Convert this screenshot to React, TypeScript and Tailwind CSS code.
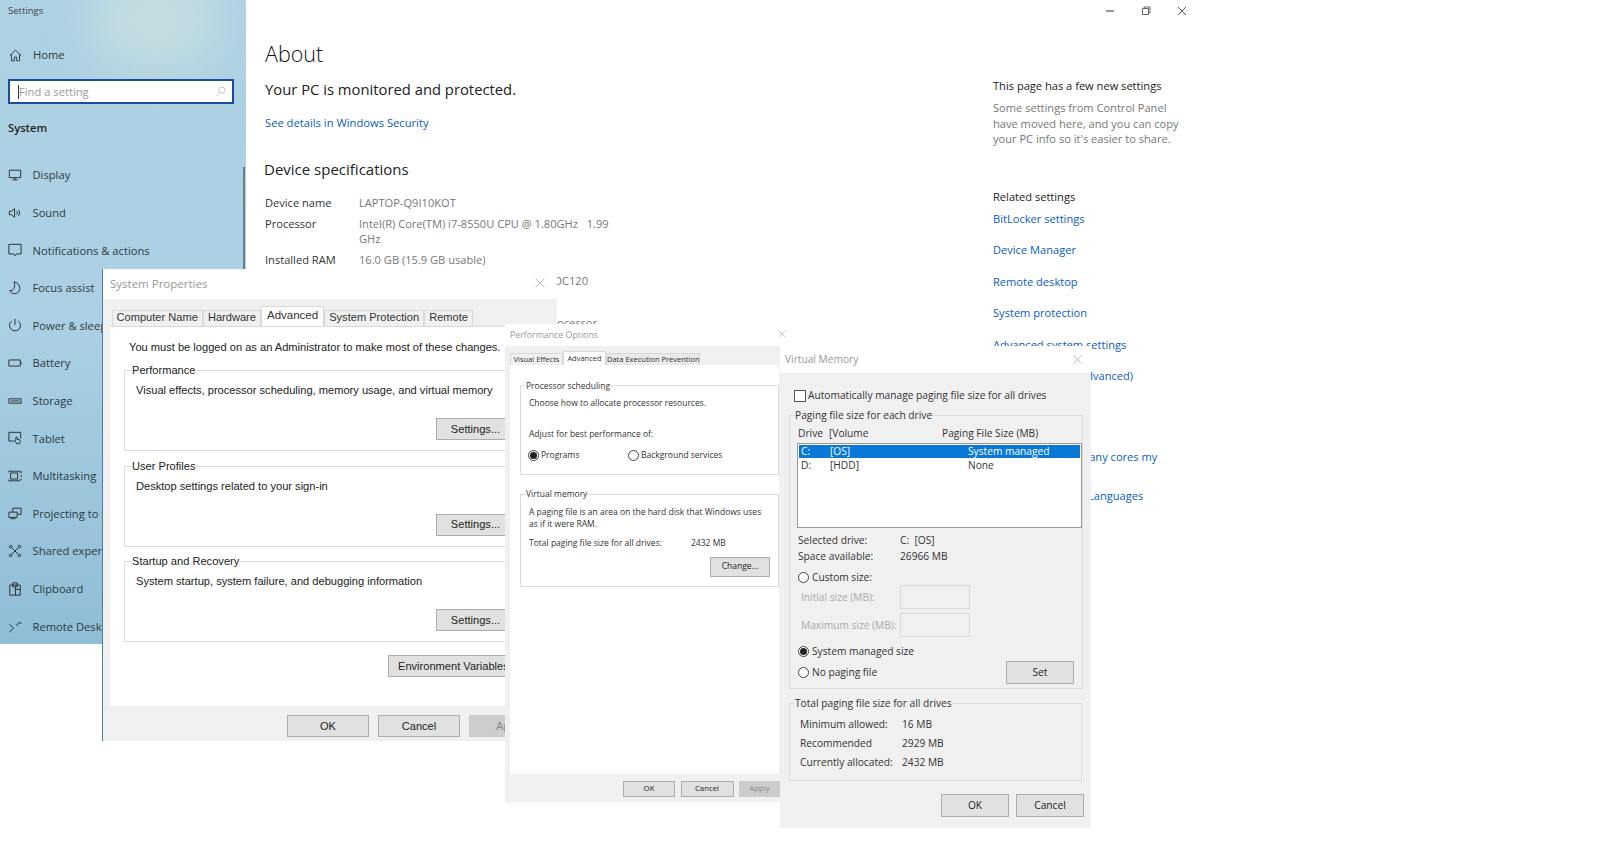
import type { ReactNode } from 'react';

const SEGOE = 'font-["Open_Sans","Noto_Sans",sans-serif]';
const ARIAL = 'font-["Liberation_Sans",Arial,sans-serif]';

// thin windows 10 style nav glyphs, 16x16 box
const navItems: { label: string; icon: ReactNode }[] = [
  {
    label: 'Display',
    icon: <path d="M1.5 2.5h13v8.500h-13zM5 13.500h6M8 11v2.500" />,
  },
  {
    label: 'Sound',
    icon: <path d="M1.500 6v4h2.500l3.500 3V3L4 6zM10 6c.8 1 .8 3 0 4M12 4.500c1.600 2 1.600 5 0 7" />,
  },
  {
    label: 'Notifications & actions',
    icon: <path d="M1 1.500h14v11H9.500L8 14.500l-1.500-2H1z" />,
  },
  {
    label: 'Focus assist',
    icon: <path d="M7 1c3 .5 6.500 3 6.500 7.500 0 3.500-2.500 6-6 6-2.500 0-4.500-1.300-5.500-3.500 4 .5 7-3.500 5-10z" />,
  },
  {
    label: 'Power & sleep',
    icon: <path d="M8 1v7M4.500 3.200a6.300 6.300 0 1 0 7 0" />,
  },
  {
    label: 'Battery',
    icon: <path d="M1 4.500h13v7H1zM15 7v2" />,
  },
  {
    label: 'Storage',
    icon: <path d="M1 5.500h14v5H1zM3 8h10" />,
  },
  {
    label: 'Tablet',
    icon: <path d="M7 11.500H1v-10h13.500v7M9 9.500V7.500c0-1 1.500-1 1.500 0v2l3 .5c1 .5.500 3-.5 4.500H10l-2-3z" />,
  },
  {
    label: 'Multitasking',
    icon: <path d="M3 4.500h8v7H3zM1 2.500h12M1 13.500h12M15 2v3M15 7v2M15 11v2M1 2.500v1.500M13 2.500v1.500M1 12v1.500M13 12v1.500" />,
  },
  {
    label: 'Projecting to this PC',
    icon: <path d="M5.500 7V2.500h9.500v7h-4.500M1 7h9.500v6H1zM3 14.500h5.500" />,
  },
  {
    label: 'Shared experiences',
    icon: (
      <>
        <path d="M4.500 4.500l7 7M11.500 4.500l-7 7" />
        <circle cx="3" cy="3" r="1.500" />
        <circle cx="13" cy="3" r="1.500" />
        <circle cx="3" cy="13" r="1.500" />
        <circle cx="13" cy="13" r="1.500" />
      </>
    ),
  },
  {
    label: 'Clipboard',
    icon: <path d="M2 3.500h12v11.500H2zM5.500 1h5v4.500h-5zM8.500 5.500V15M8.500 8.500H14" />,
  },
  {
    label: 'Remote Desktop',
    icon: <path d="M1.500 6l5 4.500-5 4.500M9.500 8l3-4 3 1" />,
  },
];

function NavIcon({ children }: { children: ReactNode }) {
  return (
    <svg viewBox="0 0 16 16" fill="none" stroke="#2a2f33" strokeWidth="1.100" className="w-[14px] h-[14px] shrink-0">
      {children}
    </svg>
  );
}

function Sidebar() {
  return (
    <aside className="relative w-[246px] h-[644px] shrink-0 overflow-hidden bg-gradient-to-b from-[#aed2e4] via-[#abd0e3] to-[#8fbdd6] text-[#222]">
      <div className="absolute left-[90px] -top-[30px] w-[130px] h-[100px] rounded-full bg-[#c4dde0] blur-xl" />
      <div className="relative">
        <p className="pl-[8px] pt-[5px] h-[25px] text-[9.500px] leading-[12px] text-[#444]">Settings</p>
        <div className="flex items-center gap-[11px] pl-[9px] mt-[19px] h-[22px]">
          <svg viewBox="0 0 16 16" fill="none" stroke="#222" strokeWidth="1" className="w-[13px] h-[13px]">
            <path d="M1 8l7-6.500L15 8M3 6.500v8h3.500v-4.500h3v4.500H13v-8" />
          </svg>
          <span className="text-[11.200px] leading-none text-[#2c3a42]">Home</span>
        </div>
        <div className="ml-[8px] mr-[12px] mt-[13px] h-[25px] border-2 border-[#1b4ba0] bg-white flex items-center justify-between pl-[8px] pr-[6px]">
          <span className="text-[11.200px] text-[#999] border-l border-[#333] leading-[14px]">Find a setting</span>
          <svg viewBox="0 0 16 16" fill="none" stroke="#aaa" strokeWidth="1" className="w-[11px] h-[11px]">
            <circle cx="10" cy="6" r="4.500" />
            <path d="M7 9.500L1.500 15" />
          </svg>
        </div>
        <p className="pl-[8px] mt-[15px] text-[11.200px] leading-[18px] font-semibold">System</p>
        <nav className="mt-[27.500px] flex flex-col gap-[16.600px]">
          {navItems.map((item) => (
            <div key={item.label} className="flex items-center gap-[10.500px] pl-[8px] h-[21px]">
              <NavIcon>{item.icon}</NavIcon>
              <span className="text-[11.200px] leading-none whitespace-nowrap text-[#2c3a42]">{item.label}</span>
            </div>
          ))}
        </nav>
      </div>
      <div className="absolute right-[1px] top-[167px] w-[2px] h-[105px] bg-[#6b7f8a]" />
    </aside>
  );
}

function SpecRow({ label, children }: { label: string; children: ReactNode }) {
  return (
    <div className="flex text-[11.100px] leading-[15.500px]">
      <span className="w-[94px] shrink-0 text-[#333]">{label}</span>
      <span className="w-[262px] text-[#777]">{children}</span>
    </div>
  );
}

function RightLink({ children, className = 'mb-[15.600px]' }: { children: ReactNode; className?: string }) {
  return <a className={`block text-[11.100px] leading-[16px] text-[#0a5cc4] ${className}`}>{children}</a>;
}

function MainContent() {
  return (
    <main className="flex-1 flex">
      <div className="w-[747px] pl-[19px] pt-[40px]">
        <h1 className="text-[21.500px] leading-[28px] font-light text-[#111]">About</h1>
        <p className="mt-[10px] text-[14.800px] leading-[22px] text-[#222]">Your PC is monitored and protected.</p>
        <a className="block mt-[14px] text-[11.200px] leading-[18px] text-[#0a5cc4]">See details in Windows Security</a>
        <h2 className="mt-[26px] -ml-[1px] text-[15px] leading-[22px] text-[#222]">Device specifications</h2>
        <div className="mt-[14.500px] flex flex-col gap-[5.500px]">
          <SpecRow label="Device name">LAPTOP-Q9I10KOT</SpecRow>
          <SpecRow label="Processor">Intel(R) Core(TM) i7-8550U CPU @ 1.80GHz &nbsp; 1.99 GHz</SpecRow>
          <SpecRow label="Installed RAM">16.0 GB (15.9 GB usable)</SpecRow>
          <SpecRow label="Device ID">
            <span className="block w-[229px] text-right">DC120</span>
          </SpecRow>
          <SpecRow label="Product ID"> </SpecRow>
          <SpecRow label="System type">
            <span className="block w-[238px] text-right">processor</span>
          </SpecRow>
        </div>
      </div>
      <div className="w-[192px] pt-[78px]">
        <p className="text-[11.100px] leading-[16px] text-[#222]">This page has a few new settings</p>
        <p className="mt-[6px] text-[11.100px] leading-[15.500px] text-[#777]">
          Some settings from Control Panel have moved here, and you can copy your PC info so it&apos;s easier to share.
        </p>
        <p className="mt-[42px] mb-[6px] text-[11.100px] leading-[16px] text-[#222]">Related settings</p>
        <RightLink>BitLocker settings</RightLink>
        <RightLink>Device Manager</RightLink>
        <RightLink>Remote desktop</RightLink>
        <RightLink>System protection</RightLink>
        <RightLink>Advanced system settings</RightLink>
        <RightLink>Rename this PC (advanced)</RightLink>
        <p className="mt-[44px] mb-[5px] text-[11.100px] leading-[16px] text-[#222]">Help from the web</p>
        <RightLink className="mb-[6.400px]">Finding out how many cores my processor has</RightLink>
        <RightLink>Checking multiple Languages support</RightLink>
      </div>
    </main>
  );
}

function WindowControls() {
  return (
    <div className="absolute left-[1105px] top-0 flex items-center h-[21px] gap-[26px]">
      <svg viewBox="0 0 10 10" fill="none" stroke="#333" className="w-[10px] h-[10px]">
        <path d="M1 5h8" />
      </svg>
      <svg viewBox="0 0 10 10" fill="none" stroke="#666" className="w-[10px] h-[10px]">
        <path d="M1.500 2.500h6v6h-6zM3 2.500V1h6v6H7.500" />
      </svg>
      <svg viewBox="0 0 10 10" fill="none" stroke="#555" className="w-[10px] h-[10px]">
        <path d="M1 1l8 8M9 1l-8 8" />
      </svg>
    </div>
  );
}

function CloseX({ className }: { className: string }) {
  return (
    <svg viewBox="0 0 10 10" fill="none" stroke="#aaa" strokeWidth="0.800" className={className}>
      <path d="M0.500 0.500l9 9M9.500 0.500l-9 9" />
    </svg>
  );
}

function Btn({ label, className, disabled }: { label: string; className: string; disabled?: boolean }) {
  return (
    <div
      className={`flex items-center justify-center border whitespace-nowrap overflow-hidden ${
        disabled ? 'bg-[#cccccc] border-[#cccccc] text-[#8a8a8a]' : 'bg-[#e1e1e1] border-[#adadad] text-[#222]'
      } ${className}`}
    >
      {label}
    </div>
  );
}

function Group({ title, inset, className, children }: { title: string; inset: string; className: string; children: ReactNode }) {
  return (
    <fieldset className={`border border-[#dcdcdc] ${className}`}>
      <legend className={`px-0 leading-none ${inset}`}>{title}</legend>
      {children}
    </fieldset>
  );
}

function SystemProperties() {
  const tabs = ['Computer Name', 'Hardware', 'Advanced', 'System Protection', 'Remote'];
  return (
    <section className={`absolute left-[102px] top-[269px] w-[455px] h-[472px] border-l border-l-[#4a7fa5] flex flex-col ${ARIAL}`}>
      <header className="relative h-[30px] bg-white flex items-center pl-[7px] text-[11.500px] text-[#999]">
        <span className={SEGOE}>System Properties</span>
        <CloseX className="absolute right-[12px] top-[9px] w-[10px] h-[10px]" />
      </header>
      <div className="flex-1 bg-[#f0f0f0] flex flex-col">
        <div className="pl-[8.500px] h-[27px] flex items-end">
          {tabs.map((t) => (
            <div
              key={t}
              className={
                t === 'Advanced'
                  ? 'h-[20px] px-[5px] bg-white border border-b-0 border-[#d9d9d9] text-[11.500px] leading-[16px] text-[#333]'
                  : 'h-[16px] px-[4px] bg-[#f0f0f0] border border-b-0 border-[#d9d9d9] text-[11.100px] leading-[13px] text-[#333]'
              }
            >
              {t}
            </div>
          ))}
        </div>
        <div className="mx-[7px] h-[380px] w-[440px] bg-white border-t border-[#d9d9d9] pl-[14px] text-[11.100px] text-[#222]">
          <p className="mt-[12px] leading-[16px] whitespace-nowrap pl-[5px]">You must be logged on as an Administrator to make most of these changes.</p>
          <Group title="Performance" inset="ml-[7px]" className="mt-[10px] h-[86px] w-[420px]">
            <p className="pl-[11px] mt-[7px] leading-[14px] whitespace-nowrap">Visual effects, processor scheduling, memory usage, and virtual memory</p>
            <Btn label="Settings..." className="ml-[311px] mt-[21px] w-[79px] h-[22px]" />
          </Group>
          <Group title="User Profiles" inset="ml-[7px]" className="mt-[9.500px] h-[86px] w-[420px]">
            <p className="pl-[11px] mt-[7px] leading-[14px]">Desktop settings related to your sign-in</p>
            <Btn label="Settings..." className="ml-[311px] mt-[21px] w-[79px] h-[22px]" />
          </Group>
          <Group title="Startup and Recovery" inset="ml-[7px]" className="mt-[9.500px] h-[86px] w-[420px]">
            <p className="pl-[11px] mt-[7px] leading-[14px]">System startup, system failure, and debugging information</p>
            <Btn label="Settings..." className="ml-[311px] mt-[21px] w-[79px] h-[22px]" />
          </Group>
          <Btn label="Environment Variables..." className="ml-[264px] mt-[13px] w-[160px] h-[22px] justify-start pl-[9px]" />
        </div>
        <div className="flex gap-[9px] pl-[184px] pt-[9px] text-[11.100px]">
          <Btn label="OK" className="w-[82px] h-[22px]" />
          <Btn label="Cancel" className="w-[82px] h-[22px]" />
          <Btn label="Apply" disabled className="w-[82px] h-[22px]" />
        </div>
      </div>
    </section>
  );
}

function Radio({ on }: { on?: boolean }) {
  return (
    <span className="w-[11px] h-[11px] rounded-full border border-[#444] bg-white flex items-center justify-center shrink-0">
      {on && <span className="w-[7px] h-[7px] rounded-full bg-[#222]" />}
    </span>
  );
}

function PerformanceOptions() {
  return (
    <section className={`absolute left-[505px] top-[324px] w-[275px] h-[478px] flex flex-col text-[8.500px] ${SEGOE}`}>
      <header className="relative h-[22px] bg-white flex items-center pl-[5px] pt-[1px] text-[8.800px] text-[#999]">
        Performance Options
        <CloseX className="absolute right-[-6px] top-[6px] w-[8px] h-[8px]" />
      </header>
      <div className="flex-1 bg-[#f0f0f0] pl-[5px] flex flex-col">
        <div className="h-[19px] flex items-end text-[#333] text-[7.500px] whitespace-nowrap">
          <div className="w-[53px] h-[12px] text-center leading-[11px] border border-b-0 border-[#d9d9d9]">Visual Effects</div>
          <div className="w-[43px] h-[14px] text-center leading-[12px] bg-white border border-b-0 border-[#d9d9d9]">Advanced</div>
          <div className="w-[94px] h-[12px] text-center leading-[11px] border border-b-0 border-[#d9d9d9] bg-[#e9e9e9]">Data Execution Prevention</div>
        </div>
        <div className="h-[409px] w-[269px] bg-white pl-[10px] text-[#333] flow-root">
          <Group title="Processor scheduling" inset="ml-[5px]" className="mt-[16.500px] h-[93.500px] w-[259px]">
            <p className="pl-[8px] mt-[7px] leading-[12px]">Choose how to allocate processor resources.</p>
            <p className="pl-[8px] mt-[19px] leading-[12px]">Adjust for best performance of:</p>
            <div className="flex items-center pl-[7px] mt-[9px] h-[12px]">
              <Radio on />
              <span className="ml-[2px] w-[87px]">Programs</span>
              <Radio />
              <span className="ml-[2px]">Background services</span>
            </div>
          </Group>
          <Group title="Virtual memory" inset="ml-[5px]" className="mt-[15px] h-[97px] w-[259px]">
            <p className="pl-[8px] mt-[7.500px] leading-[12.300px] w-[250px]">A paging file is an area on the hard disk that Windows uses as if it were RAM.</p>
            <div className="flex pl-[8px] mt-[6px] leading-[12px]">
              <span className="w-[162px]">Total paging file size for all drives:</span>
              <span>2432 MB</span>
            </div>
            <Btn label="Change..." className="ml-[189px] mt-[8px] w-[60px] h-[20px]" />
          </Group>
        </div>
        <div className="flex gap-[5.500px] pl-[113px] pt-[7px] text-[7.800px]">
          <Btn label="OK" className="w-[52px] h-[16px]" />
          <Btn label="Cancel" className="w-[53px] h-[16px]" />
          <Btn label="Apply" disabled className="w-[41px] h-[16px]" />
        </div>
      </div>
    </section>
  );
}

function VmInput() {
  return <span className="w-[70px] h-[24px] border border-[#d9d9d9] bg-[#f0f0f0]" />;
}

function VirtualMemory() {
  return (
    <section className={`absolute left-[780px] top-[346px] w-[311px] h-[482px] flex flex-col text-[10.200px] text-[#333] ${SEGOE}`}>
      <header className="relative h-[27px] bg-white flex items-center pl-[5px] pt-[1px] text-[10.200px] text-[#999]">
        Virtual Memory
        <CloseX className="absolute right-[9px] top-[9px] w-[9px] h-[9px]" />
      </header>
      <div className="flex-1 bg-[#f0f0f0] pl-[9px] flow-root">
        <div className="flex items-center gap-[2px] h-[14px] mt-[16px] ml-[5px]">
          <span className="w-[12px] h-[12px] border border-[#555] bg-white" />
          <span>Automatically manage paging file size for all drives</span>
        </div>
        <Group title="Paging file size for each drive" inset="ml-[5px]" className="mt-[7px] h-[279px] w-[293px]">
          <div className="flex mt-[6px] pl-[8px] h-[14px] leading-[14px]">
            <span className="w-[31px]">Drive</span>
            <span className="w-[113px]">[Volume</span>
            <span>Paging File Size (MB)</span>
          </div>
          <div className="mt-[3px] ml-[7px] w-[285px] h-[85px] border border-[#999] bg-white p-px">
            <div className="flex h-[13px] leading-[13px] bg-[#0a78d7] text-white">
              <span className="w-[31px] pl-[2px]">C:</span>
              <span className="w-[138px]">[OS]</span>
              <span>System managed</span>
            </div>
            <div className="flex h-[14px] leading-[14px]">
              <span className="w-[31px] pl-[2px]">D:</span>
              <span className="w-[138px]">[HDD]</span>
              <span>None</span>
            </div>
          </div>
          <div className="flex mt-[4px] pl-[8px] leading-[16px]">
            <span className="w-[102px]">Selected drive:</span>
            <span>C: &nbsp;[OS]</span>
          </div>
          <div className="flex pl-[8px] leading-[16px]">
            <span className="w-[102px]">Space available:</span>
            <span>26966 MB</span>
          </div>
          <div className="flex items-center gap-[3px] mt-[6px] pl-[8px] h-[14px]">
            <Radio />
            <span>Custom size:</span>
          </div>
          <div className="flex items-center mt-[1px] pl-[11px] text-[#aaa] whitespace-nowrap">
            <span className="w-[99px]">Initial size (MB):</span>
            <VmInput />
          </div>
          <div className="flex items-center mt-[4px] pl-[11px] text-[#aaa] whitespace-nowrap">
            <span className="w-[99px]">Maximum size (MB):</span>
            <VmInput />
          </div>
          <div className="flex items-center gap-[3px] mt-[7px] pl-[8px] h-[14px]">
            <Radio on />
            <span>System managed size</span>
          </div>
          <div className="flex items-center mt-[7px] pl-[8px] h-[14px]">
            <Radio />
            <span className="ml-[3px] w-[194px]">No paging file</span>
            <Btn label="Set" className="w-[68px] h-[23px] shrink-0" />
          </div>
        </Group>
        <Group title="Total paging file size for all drives" inset="ml-[5px]" className="mt-[9px] h-[83px] w-[293px]">
          <div className="pl-[10px] mt-[9px] flex flex-col gap-[5px] leading-[14px]">
            <div className="flex">
              <span className="w-[102px]">Minimum allowed:</span>
              <span>16 MB</span>
            </div>
            <div className="flex">
              <span className="w-[102px]">Recommended</span>
              <span>2929 MB</span>
            </div>
            <div className="flex">
              <span className="w-[102px]">Currently allocated:</span>
              <span>2432 MB</span>
            </div>
          </div>
        </Group>
        <div className="flex gap-[7px] pl-[152px] mt-[13px]">
          <Btn label="OK" className="w-[68px] h-[23px]" />
          <Btn label="Cancel" className="w-[68px] h-[23px]" />
        </div>
      </div>
    </section>
  );
}

export default function App() {
  return (
    <div className={`relative w-[1600px] h-[858px] bg-white overflow-hidden ${SEGOE}`}>
      <div className="flex w-[1200px] items-start">
        <Sidebar />
        <MainContent />
      </div>
      <WindowControls />
      <SystemProperties />
      <PerformanceOptions />
      <VirtualMemory />
    </div>
  );
}
